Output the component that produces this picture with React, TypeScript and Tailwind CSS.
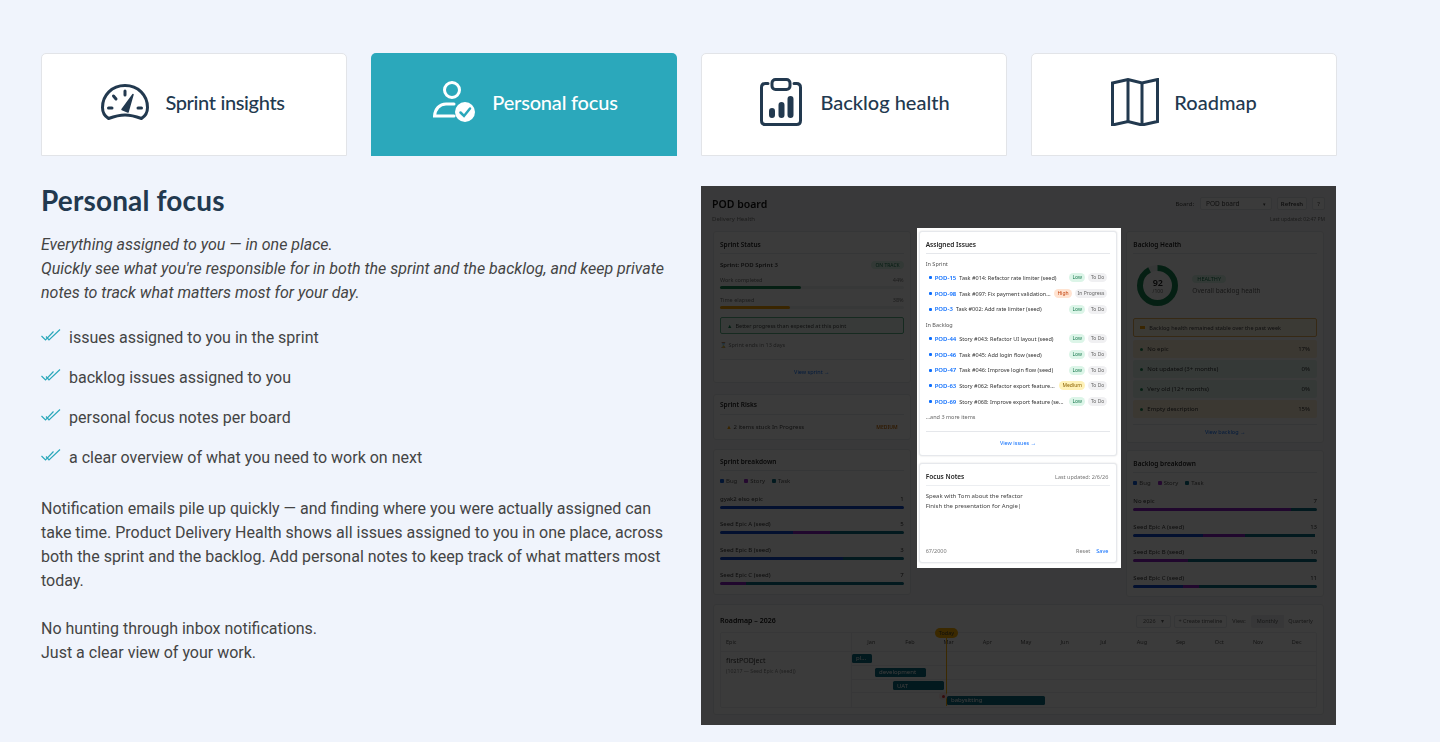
import React from "react";

function GaugeIcon() {
  return (
    <svg width="48" height="36" viewBox="0 0 48 36" fill="none" stroke="#22394f" strokeWidth="3" strokeLinecap="round" strokeLinejoin="round">
      <path d="M7.500 34.500C3.500 32 1.500 27.500 1.500 23.500C1.500 11 11 1.500 24 1.500C37 1.500 46.500 11 46.500 23.500C46.500 27.500 44.500 32 40.500 34.500C35 32.500 30 31 24 31C18 31 13 32.500 7.500 34.500Z" />
      <path d="M24 7V11M12.500 12L15 15M7.500 24H11M37 24H40.500" />
      <path d="M21 25.500L32 10.500L27 28Z" fill="#22394f" strokeWidth="1.500" />
    </svg>
  );
}
function PersonIcon() {
  return (
    <svg width="44" height="42" viewBox="0 0 44 42" fill="none" stroke="#fff" strokeWidth="3" strokeLinecap="round">
      <circle cx="19" cy="9" r="7.500" />
      <path d="M21 23H13C6.500 23 2 28 1.500 35H21" />
      <circle cx="32" cy="31" r="10" fill="#fff" stroke="none" />
      <path d="M27.500 31.500L31 35L37 27.500" stroke="#2ba8bb" strokeWidth="2.500" />
    </svg>
  );
}
function ClipboardIcon() {
  return (
    <svg width="42" height="48" viewBox="0 0 42 48" fill="none" stroke="#22394f" strokeWidth="3" strokeLinecap="round">
      <path d="M8 5.500H5.500C3 5.500 1.500 7 1.500 9.500V42.500C1.500 45 3 46.500 5.500 46.500H36.500C39 46.500 40.500 45 40.500 42.500V9.500C40.500 7 39 5.500 36.500 5.500H34" />
      <rect x="12" y="1.500" width="18" height="10" rx="3.500" />
      <path d="M12 33V37M21.500 27V37M30.500 21V37" strokeWidth="6" />
    </svg>
  );
}
function MapIcon() {
  return (
    <svg width="48" height="48" viewBox="0 0 48 48" fill="none" stroke="#22394f" strokeWidth="3" strokeLinejoin="miter">
      <path d="M1.500 5L17 1.500L31 5L46.500 1.500V43.500L31 47L17 43.500L1.500 47Z" />
      <path d="M17 1.500V43.500M31 5V47" />
    </svg>
  );
}
function DoubleCheck() {
  return (
    <svg width="20" height="13" viewBox="0 0 20 13" fill="none" stroke="#2ba8bb" strokeWidth="1.200" className="shrink-0">
      <path d="M0.500 7L4.500 11L12.500 2.500" />
      <path d="M5 7.500L8 11L19 0.500" />
    </svg>
  );
}

const tabs = [
  { label: "Sprint insights", icon: <GaugeIcon />, active: false, cls: "gap-[16px] pr-[2px] tracking-[-0.35px]" },
  { label: "Personal focus", icon: <PersonIcon />, active: true, cls: "gap-[15px] pl-[3px] tracking-[-0.2px]" },
  { label: "Backlog health", icon: <ClipboardIcon />, active: false, cls: "gap-[18px] pl-[2px]" },
  { label: "Roadmap", icon: <MapIcon />, active: false, cls: "gap-[15px]" },
];

function Card({ className = "", children }: { className?: string; children: React.ReactNode }) {
  return <div className={`rounded-[3px] border border-[#e6e8ec] bg-white px-[6px] ${className}`}>{children}</div>;
}
function CardTitle({ children, cls = "h-[22px] pt-[5px]" }: { children: React.ReactNode; cls?: string }) {
  return (
    <div className={`flex items-center justify-between border-b border-[#e5e7eb] text-[6.500px] font-semibold text-[#222] ${cls}`}>
      <span>{children}</span>
    </div>
  );
}
function Legend() {
  const items = [["Bug", "bg-[#0d5bd7]"], ["Story", "bg-[#9b27c9]"], ["Task", "bg-[#0b7285]"]];
  return (
    <div className="mt-[6px] flex h-[8px] items-center gap-[7px] text-[6px] text-[#555]">
      {items.map(([t, c]) => (
        <span key={t} className="flex items-center gap-[2px]">
          <span className={`h-[4px] w-[4px] rounded-[1px] ${c}`} />
          {t}
        </span>
      ))}
    </div>
  );
}
function EpicBar({ name, n, segs, mt }: { name: string; n: number; segs: [number, string][]; mt: string }) {
  return (
    <div className={mt}>
      <div className="flex h-[8px] items-center justify-between text-[6px] text-[#333]">
        <span>{name}</span>
        <span>{n}</span>
      </div>
      <div className="mt-[3px] flex h-[3px] overflow-hidden rounded-full">
        {segs.map(([w, c], i) => (
          <div key={i} className={c} style={{ width: `${w}%` }} />
        ))}
      </div>
    </div>
  );
}
const B = "bg-[#0d47c9]";
const S = "bg-[#8a1fc0]";
const T = "bg-[#0b6b80]";

function Badge({ t, c }: { t: string; c: string }) {
  return <span className={`block rounded-full px-[3px] text-[5px] leading-[9px] ${c}`}>{t}</span>;
}
const LOW = "bg-[#dcf5e8] text-[#18794e]";
const HIGH = "bg-[#ffe3d1] text-[#c2410c]";
const MED = "bg-[#fff2b8] text-[#8a6100]";
const TODO = "bg-[#f0f0f2] text-[#666]";

function Issue({ k, t, p, pc, s = "To Do" }: { k: string; t: string; p: string; pc: string; s?: string }) {
  return (
    <div className="flex h-[15.700px] items-center pl-[3px] pr-[3px] text-[5.500px] text-[#333]">
      <span className="mr-[3px] h-[3px] w-[3px] shrink-0 rounded-[1px] bg-[#0d6efd]" />
      <span className="mr-[3px] shrink-0 text-[6px] font-semibold text-[#0d6efd]">{k}</span>
      <span className="min-w-0 flex-1 truncate">{t}</span>
      <span className="ml-[3px] shrink-0"><Badge t={p} c={pc} /></span>
      <span className="ml-[3px] shrink-0"><Badge t={s} c={TODO} /></span>
    </div>
  );
}
function HealthRow({ t, v, c }: { t: string; v: string; c: string }) {
  return (
    <div className={`mt-[2px] flex h-[18px] items-center justify-between rounded-[2px] px-[7px] text-[6px] text-[#333] ${c}`}>
      <span className="flex items-center gap-[4px]">
        <span className="h-[3px] w-[3px] rounded-full bg-[#198754]" />
        {t}
      </span>
      <span>{v}</span>
    </div>
  );
}
function Today() {
  return (
    <>
      <div className="absolute left-[213.500px] top-[-5px] flex w-[24px] flex-col items-center">
        <span className="rounded-full bg-[#ffb000] px-[4px] text-[5.500px] leading-[10px] text-[#443]">Today</span>
        <span className="h-[68px] w-[1.500px] bg-[#ffb000]" />
      </div>
      <span className="absolute left-[218px] top-[59px] flex h-[8px] w-[8px] items-center justify-center rounded-full bg-[#fdeaea]">
        <span className="h-[3px] w-[3px] rounded-full bg-[#e03131]" />
      </span>
    </>
  );
}
function GanttRow({ children }: { children: React.ReactNode }) {
  return <div className="flex h-[13.750px] items-center border-b border-[#eceef1] text-[6px] text-white last:border-b-0">{children}</div>;
}
const barCls = "flex h-[9px] items-center rounded-[1.500px] bg-[#0b6b80] pl-[4px]";

function MockShot() {
  const months = ["Jan", "Feb", "Mar", "Apr", "May", "Jun", "Jul", "Aug", "Sep", "Oct", "Nov", "Dec"];
  return (
    <div className="relative h-[539px] w-[635px] overflow-hidden bg-[#f6f6fa] font-['Noto_Sans',sans-serif] leading-[10px] blur-[0.4px]">
      <div className="flex h-[45px] items-start justify-between px-[11px] pt-[11px]">
        <div>
          <div className="text-[10.500px] font-semibold leading-[14px] text-[#111]">POD board</div>
          <div className="mt-[4px] text-[6px] leading-[9px] text-[#777]">Delivery Health</div>
        </div>
        <div className="flex flex-col items-end">
          <div className="flex items-center text-[6px] text-[#444]">
            <span className="mr-[6px]">Board:</span>
            <span className="flex h-[13px] w-[72px] items-center justify-between rounded-[2px] border border-[#e2e4e8] bg-white px-[5px] text-[6.500px]">
              POD board<span className="text-[5px]">▾</span>
            </span>
            <span className="ml-[5px] flex h-[13px] w-[30px] items-center justify-center rounded-[2px] border border-[#e2e4e8] bg-white font-semibold">Refresh</span>
            <span className="ml-[5px] flex h-[13px] w-[13px] items-center justify-center rounded-[2px] border border-[#e2e4e8] bg-white">?</span>
          </div>
          <div className="mt-[5px] text-[5px] leading-[8px] text-[#777]">Last updated: 02:47 PM</div>
        </div>
      </div>

      <div className="flex h-[373px] items-start px-[12px]">
        <div className="flex h-full w-[198px] flex-col">
          <Card className="h-[152px]">
            <CardTitle>Sprint Status</CardTitle>
            <div className="flex h-[22px] items-center justify-between text-[6px] font-semibold text-[#333]">
              <span>Sprint: POD Sprint 3</span>
              <span className="rounded-full bg-[#dcf5e8] px-[4px] text-[5px] font-normal leading-[8px] text-[#18794e]">ON TRACK</span>
            </div>
            <div className="flex h-[8px] items-center justify-between text-[5.500px] text-[#777]"><span>Work completed</span><span>44%</span></div>
            <div className="mt-[2px] h-[3px] rounded-full bg-[#eef0f2]"><div className="h-full w-[44%] rounded-full bg-[#198754]" /></div>
            <div className="mt-[7px] flex h-[8px] items-center justify-between text-[5.500px] text-[#777]"><span>Time elapsed</span><span>38%</span></div>
            <div className="mt-[2px] h-[3px] rounded-full bg-[#eef0f2]"><div className="h-full w-[38%] rounded-full bg-[#f59f00]" /></div>
            <div className="mt-[8px] flex h-[17px] items-center gap-[3px] rounded-[2px] border border-[#5fb58a] bg-[#f1fbf5] px-[6px] text-[5.500px] text-[#444]">
              <span className="text-[#198754]">▲</span> Better progress than expected at this point
            </div>
            <div className="mt-[7px] h-[8px] text-[5.500px] leading-[8px] text-[#777]">⌛ Sprint ends in 13 days</div>
            <div className="mt-[10px] flex h-[25px] items-center justify-center border-t border-[#e5e7eb] text-[5.500px] text-[#0d6efd]">View sprint →</div>
          </Card>
          <Card className="mt-[11px] h-[46px]">
            <div className="flex h-[20px] items-center border-b border-[#e5e7eb] text-[6.500px] font-semibold text-[#222]">Sprint Risks</div>
            <div className="flex h-[24px] items-center justify-between px-[6px] text-[6px] text-[#444]">
              <span><span className="text-[#f59f00]">▲</span> 2 items stuck In Progress</span>
              <span className="text-[5px] font-semibold text-[#c96a00]">MEDIUM</span>
            </div>
          </Card>
          <Card className="mt-[9px] h-[146px]">
            <CardTitle cls="h-[21px] pt-[3px]">Sprint breakdown</CardTitle>
            <Legend />
            <EpicBar name="gyak2 elso epic" n={1} mt="mt-[10px]" segs={[[100, B]]} />
            <EpicBar name="Seed Epic A (seed)" n={5} mt="mt-[11.300px]" segs={[[40, B], [20, S], [40, T]]} />
            <EpicBar name="Seed Epic B (seed)" n={3} mt="mt-[11.300px]" segs={[[67, B], [33, T]]} />
            <EpicBar name="Seed Epic C (seed)" n={7} mt="mt-[11.300px]" segs={[[14, S], [86, T]]} />
          </Card>
        </div>

        <div className="relative z-10 ml-[6px] mt-[-3px] h-[340px] w-[205px] bg-white pb-[5px] pl-[2px] pr-[4px] pt-[3px]">
          <Card className="h-[225px] shadow-[0_0_2px_#ddd]">
            <div className="flex h-[22px] items-center border-b border-[#e5e7eb] pt-[4px] text-[6.500px] font-semibold text-[#222]">Assigned Issues</div>
            <div className="mb-[2px] mt-[6px] h-[8px] text-[5.500px] leading-[8px] text-[#555]">In Sprint</div>
            <Issue k="POD-15" t="Task #014: Refactor rate limiter (seed)" p="Low" pc={LOW} />
            <Issue k="POD-98" t="Task #097: Fix payment validation ..." p="High" pc={HIGH} s="In Progress" />
            <Issue k="POD-3" t="Task #002: Add rate limiter (seed)" p="Low" pc={LOW} />
            <div className="mt-[4px] h-[8px] text-[5.500px] leading-[8px] text-[#555]">In Backlog</div>
            <div className="mt-[2px]">
              <Issue k="POD-44" t="Story #043: Refactor UI layout (seed)" p="Low" pc={LOW} />
              <Issue k="POD-46" t="Task #045: Add login flow (seed)" p="Low" pc={LOW} />
              <Issue k="POD-47" t="Task #046: Improve login flow (seed)" p="Low" pc={LOW} />
              <Issue k="POD-63" t="Story #062: Refactor export feature..." p="Medium" pc={MED} />
              <Issue k="POD-69" t="Story #068: Improve export feature (se..." p="Low" pc={LOW} />
            </div>
            <div className="mt-[3px] h-[8px] text-[5.500px] leading-[8px] text-[#666]">...and 3 more items</div>
            <div className="mt-[10px] flex h-[24px] items-center justify-center border-t border-[#e5e7eb] text-[5.500px] text-[#0d6efd]">View issues →</div>
          </Card>
          <Card className="mt-[7px] flex h-[100px] flex-col shadow-[0_0_2px_#ddd]">
            <div className="flex h-[22px] items-center justify-between border-b border-[#eceef1] pt-[4px] text-[6.500px] font-semibold text-[#222]">
              Focus Notes<span className="pr-[2px] text-[5.500px] font-normal text-[#777]">Last updated: 2/6/26</span>
            </div>
            <div className="mt-[5px] text-[6px] leading-[10px] text-[#444]">
              Speak with Tom about the refactor
              <br />
              Finish the presentation for Angie|
            </div>
            <div className="mb-[7px] mt-auto flex items-center justify-between text-[5.500px] leading-[8px] text-[#777]">
              <span>67/2000</span>
              <span className="flex gap-[6px] pr-[2px]"><span>Reset</span><span className="text-[#0d6efd]">Save</span></span>
            </div>
          </Card>
        </div>

        <div className="ml-[5px] w-[198px]">
          <Card className="h-[212px]">
            <CardTitle>Backlog Health</CardTitle>
            <div className="flex h-[64px] items-center pb-[1px] pl-[4px]">
              <div className="relative flex h-[41px] w-[41px] items-center justify-center">
                <svg width="41" height="41" viewBox="0 0 41 41" className="absolute inset-0">
                  <circle cx="20.500" cy="20.500" r="17.500" fill="none" stroke="#eef0f2" strokeWidth="6" />
                  <circle cx="20.500" cy="20.500" r="17.500" fill="none" stroke="#198754" strokeWidth="6" strokeDasharray="101 110" transform="rotate(-90 20.500 20.500)" />
                </svg>
                <div className="relative text-center">
                  <div className="text-[9px] font-semibold leading-[9px] text-[#222]">92</div>
                  <div className="mt-[1px] text-[5px] leading-[6px] text-[#666]">/100</div>
                </div>
              </div>
              <div className="mb-[6px] ml-[14px]">
                <span className="inline-block rounded-full bg-[#dcf5e8] px-[5px] text-[5.500px] leading-[8px] text-[#18794e]">HEALTHY</span>
                <div className="mt-[3px] text-[6.500px] text-[#666]">Overall backlog health</div>
              </div>
            </div>
            <div className="flex h-[19px] items-center gap-[4px] rounded-[2px] border border-[#eab35a] bg-[#fff8e6] px-[6px] text-[5.500px] text-[#444]">
              <span className="h-[3px] w-[5px] bg-[#f59f00]" />Backlog health remained stable over the past week
            </div>
            <div className="mt-[3px]">
              <HealthRow t="No epic" v="17%" c="bg-[#fff1d6]" />
              <HealthRow t="Not updated (3+ months)" v="0%" c="bg-[#e3f6ee]" />
              <HealthRow t="Very old (12+ months)" v="0%" c="bg-[#e3f6ee]" />
              <HealthRow t="Empty description" v="15%" c="bg-[#fff1d6]" />
            </div>
            <div className="mt-[6px] flex h-[14px] items-center justify-center border-t border-[#e5e7eb] text-[5.500px] text-[#0d6efd]">View backlog →</div>
          </Card>
          <Card className="mt-[7px] h-[147px]">
            <CardTitle>Backlog breakdown</CardTitle>
            <Legend />
            <EpicBar name="No epic" n={7} mt="mt-[10px]" segs={[[86, S], [14, T]]} />
            <EpicBar name="Seed Epic A (seed)" n={13} mt="mt-[11.500px]" segs={[[38, B], [23, S], [38, T]]} />
            <EpicBar name="Seed Epic B (seed)" n={10} mt="mt-[11.500px]" segs={[[30, S], [70, T]]} />
            <EpicBar name="Seed Epic C (seed)" n={11} mt="mt-[11.500px]" segs={[[27, B], [9, S], [64, T]]} />
          </Card>
        </div>
      </div>

      <div className="mx-[12px] h-[111px] rounded-[3px] border border-[#e6e8ec] bg-white px-[6px]">
        <div className="flex h-[27px] items-center justify-between pt-[5px]">
          <span className="text-[7px] font-semibold text-[#111]">Roadmap – 2026</span>
          <div className="flex items-center text-[5.500px] text-[#666]">
            <span className="mr-[3px] flex h-[13px] w-[35px] items-center justify-between rounded-[2px] border border-[#e5e7eb] px-[6px]">2026 <span>▾</span></span>
            <span className="flex h-[13px] w-[53px] items-center justify-center rounded-[2px] border border-[#e5e7eb]">+ Create timeline</span>
            <span className="w-[24px] text-center">View:</span>
            <span className="flex h-[13px] w-[33px] items-center justify-center rounded-l-[2px] bg-[#eceef1]">Monthly</span>
            <span className="flex h-[13px] w-[33px] items-center justify-center">Quarterly</span>
          </div>
        </div>
        <div className="relative rounded-[2px] border border-[#eceef1] text-[5.500px] text-[#555]">
          <div className="flex h-[19px] items-center border-b border-[#eceef1]">
            <span className="w-[131px] border-r border-[#eceef1] pl-[5px] leading-[18px]">Epic</span>
            <div className="grid flex-1 grid-cols-12 text-center">
              {months.map((m) => <span key={m}>{m}</span>)}
            </div>
          </div>
          <div className="flex h-[55px]">
            <div className="w-[131px] border-r border-[#eceef1] pl-[5px] pt-[4px]">
              <div className="text-[7px] text-[#333]">firstPODject</div>
              <div className="text-[5.200px] text-[#888]">(10217 — Seed Epic A (seed))</div>
            </div>
            <div className="flex-1">
              <GanttRow><div className={`${barCls} w-[20px]`}>pl...</div></GanttRow>
              <GanttRow><div className={`${barCls} ml-[23px] w-[51px]`}>development</div></GanttRow>
              <GanttRow><div className={`${barCls} ml-[41px] w-[51px]`}>UAT</div></GanttRow>
              <GanttRow><div className={`${barCls} ml-[95px] w-[98px]`}>babysitting</div></GanttRow>
            </div>
          </div>
          <Today />
        </div>
      </div>

      <div className="pointer-events-none absolute inset-0 bg-black/[0.77]" />
    </div>
  );
}

export default function App() {
  return (
    <div className="min-h-[742px] bg-[#f0f4fc] px-[41px] pt-[53px] font-[Roboto,sans-serif] text-[16px] leading-[24px] text-[#444]">
      <div className="grid w-[1296px] grid-cols-4 gap-[24px]">
        {tabs.map((t) => (
          <div
            key={t.label}
            className={`flex h-[103px] items-center justify-center rounded-t-[5px] pb-[5px] ${t.cls} font-['Lato',sans-serif] text-[20px] font-medium ${
              t.active ? "bg-[#2ba8bb] text-white" : "border border-[#e2e4e8] bg-white text-[#22394f]"
            }`}
          >
            {t.icon}
            <span>{t.label}</span>
          </div>
        ))}
      </div>
      <div className="mt-[30px] grid w-[1296px] grid-cols-[636px_635px] gap-[24px]">
        <div>
          <h2 className="font-['Lato',sans-serif] text-[28px] font-bold leading-[28px] tracking-[0.15px] text-[#22394f]">Personal focus</h2>
          <p className="mt-[19px] pr-[10px] italic">
            Everything assigned to you — in one place.
            <br />
            Quickly see what you're responsible for in both the sprint and the backlog, and keep private notes to track what matters most for your day.
          </p>
          <ul className="mt-[21px] flex flex-col gap-[16px]">
            {["issues assigned to you in the sprint", "backlog issues assigned to you", "personal focus notes per board", "a clear overview of what you need to work on next"].map((s) => (
              <li key={s} className="flex items-start gap-[8px]">
                <span className="pt-[3px]"><DoubleCheck /></span>
                {s}
              </li>
            ))}
          </ul>
          <p className="mt-[27px] pr-[10px]">
            Notification emails pile up quickly — and finding where you were actually assigned can take time. Product Delivery Health shows all issues assigned to you in one place, across both the sprint and the backlog. Add personal notes to keep track of what matters most today.
          </p>
          <p className="mt-[24px]">
            No hunting through inbox notifications.
            <br />
            Just a clear view of your work.
          </p>
        </div>
        <MockShot />
      </div>
    </div>
  );
}
